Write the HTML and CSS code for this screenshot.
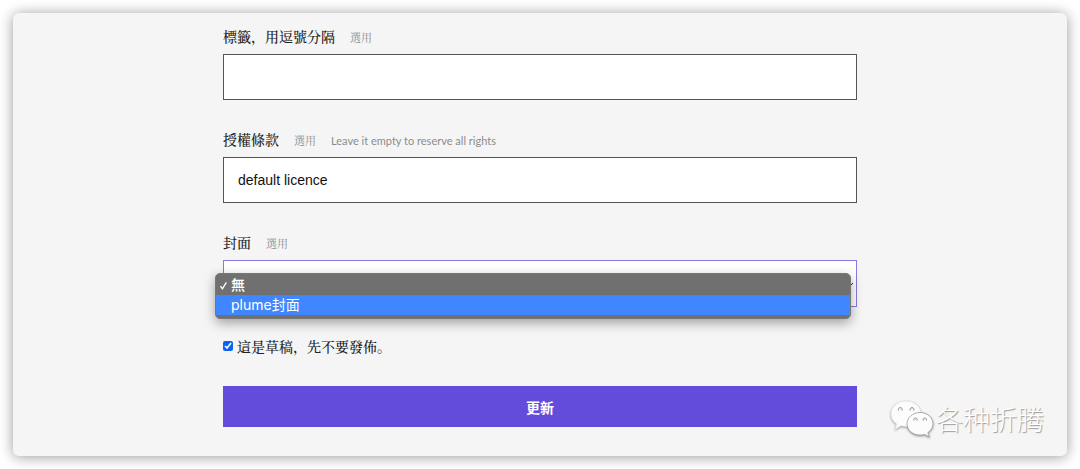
FILE: index.html
```html
<!DOCTYPE html>
<html lang="zh">
<head>
<meta charset="utf-8">
<meta name="viewport" content="width=device-width, initial-scale=1">
<title>更新</title>
<link rel="stylesheet" href="styles.css">
</head>
<body>
<main class="panel">
  <form class="form">
    <div class="field">
      <div class="field-head"><label class="label" for="tags">標籤，用逗號分隔</label><small class="hint">選用</small></div>
      <input class="control" id="tags" type="text">
    </div>
    <div class="field">
      <div class="field-head"><label class="label" for="license">授權條款</label><small class="hint">選用</small><small class="hint">Leave it empty to reserve all rights</small></div>
      <input class="control" id="license" type="text" value="default licence">
    </div>
    <div class="field">
      <div class="field-head"><label class="label" for="cover">封面</label><small class="hint">選用</small></div>
      <div class="select-wrap">
        <select class="control control-active" id="cover"><option>無</option><option>plume封面</option></select>
        <svg class="chevron" viewBox="0 0 10 6" aria-hidden="true"><path d="M1 1l4 4 4-4"/></svg>
        <ul class="menu" role="listbox" aria-label="封面">
          <li class="menu-item menu-item-current" role="option" aria-selected="true"><svg class="check" viewBox="0 0 10 10" aria-hidden="true"><path d="M1.6 5.6l2.2 3L8.2 1.6"/></svg>無</li>
          <li class="menu-item menu-item-hover" role="option" aria-selected="false">plume封面</li>
        </ul>
      </div>
    </div>
    <div class="draft">
      <input class="draft-box" id="draft" type="checkbox" checked>
      <label class="label" for="draft">這是草稿，先不要發佈。</label>
    </div>
    <button class="submit" type="submit">更新</button>
  </form>
  <div class="watermark">
    <svg class="bubbles" viewBox="0 0 44 38" aria-hidden="true">
      <path class="bubble" d="M16 1C7.500 1 1 6.700 1 14c0 4.200 2.200 7.600 5.700 10L5 29.500l6-3.800c1.600.5 3.200.8 5 .8 8.300 0 15-5.600 15-12.500S24.300 1 16 1z"/>
      <path class="eye" d="M8.500 10.500a2 2 0 1 1 3.600 0M20.200 10.500a2 2 0 1 1 3.600 0"/>
      <path class="bubble bubble-front" d="M30 12.500c-7.200 0-13 5-13 11.300s5.800 11.300 13 11.300c1.600 0 3.200-.3 4.700-.7l4.800 2.600-1.700-4.300c3.200-2.200 5.200-5.300 5.200-8.900 0-6.300-5.800-11.300-13-11.300z"/>
      <path class="eye" d="M24 20.500a1.700 1.700 0 1 1 3 0M33.300 20.500a1.700 1.700 0 1 1 3 0"/>
    </svg>
    <span>各种折腾</span>
  </div>
</main>
</body>
</html>
```
FILE: styles.css
```css
* {
  box-sizing: border-box;
}

body {
  margin: 0;
  padding: 13px;
  background: #fff;
  color: #222;
  font-family: "Noto Sans", "Noto Sans CJK TC", sans-serif;
  font-size: 14px;
}

.panel {
  position: relative;
  padding: 13px 24px 29px;
  border-radius: 6px;
  background: #f5f5f5;
  box-shadow: 0 1px 14px rgba(0, 0, 0, 0.4);
}

.form {
  display: flex;
  flex-direction: column;
  max-width: 634px;
  margin: 0 auto;
}

.field {
  margin-bottom: 29px;
}

.field-head {
  display: flex;
  align-items: baseline;
  gap: 15px;
  height: 20px;
  margin-bottom: 8px;
  line-height: 20px;
}

.label {
  font-family: "Noto Serif CJK SC", "Songti TC", "Noto Sans CJK SC", serif;
  font-size: 14px;
  font-weight: 500;
  line-height: 20px;
}

.hint {
  color: #8c8c8c;
  font-family: Lato, "Noto Serif CJK SC", "Noto Sans CJK SC", sans-serif;
  font-size: 11px;
}

.control {
  display: block;
  width: 100%;
  height: 46px;
  margin: 0;
  padding: 0 14px;
  border: 1px solid #555;
  border-radius: 0;
  background: #fff;
  color: #111;
  font-family: "Liberation Sans", "Noto Sans CJK TC", sans-serif;
  font-size: 14px;
  appearance: none;
}

.control-active {
  height: 47px;
  border-color: #8a78e0;
  outline: none;
}

.select-wrap {
  position: relative;
}

.chevron {
  position: absolute;
  top: 22px;
  right: 3px;
  width: 10px;
  height: 6px;
  fill: none;
  stroke: #333;
}

.menu {
  position: absolute;
  top: 13px;
  right: 6px;
  left: -8px;
  margin: 0;
  padding: 1px 0 3px;
  border: 1px solid #777;
  border-radius: 5px;
  background: #707070;
  box-shadow: 0 4px 12px rgba(0, 0, 0, 0.35);
  color: #fff;
  font-family: Inter, "Noto Sans CJK TC", sans-serif;
  font-size: 14px;
  line-height: 20px;
  list-style: none;
}

.menu-item {
  position: relative;
  padding-left: 15px;
}

.menu-item-current {
  font-weight: 500;
}

.menu-item-hover {
  background: #4086ff;
}

.check {
  position: absolute;
  top: 6px;
  left: 3px;
  width: 9px;
  height: 9px;
  fill: none;
  stroke: #fff;
  stroke-width: 1.5;
}

.draft {
  display: flex;
  align-items: center;
  gap: 4px;
  margin-bottom: 30px;
}

.draft-box {
  width: 10px;
  height: 10px;
  margin: 0;
  accent-color: #0b63f6;
}

.submit {
  height: 41px;
  border: 0;
  background: #634bdb;
  color: #fff;
  font-family: "Noto Sans CJK TC", sans-serif;
  font-size: 14px;
  font-weight: 700;
}

.watermark {
  position: absolute;
  right: 23px;
  bottom: 18px;
  display: flex;
  align-items: center;
  gap: 2px;
  color: #fff;
  font-family: "Noto Sans CJK SC", sans-serif;
  font-size: 27px;
  font-weight: 300;
  line-height: 38px;
  text-shadow: 1px 1px 1px #999;
}

.bubbles {
  width: 44px;
  height: 38px;
  filter: drop-shadow(0 1px 1px #999);
}

.bubble {
  fill: #fcfcfc;
  stroke: #ddd;
  stroke-width: 0.5;
}

.bubble-front {
  stroke: #999;
  stroke-width: 0.8;
}

.eye {
  fill: #f5f5f5;
  stroke: #888;
  stroke-width: 1;
}
```
